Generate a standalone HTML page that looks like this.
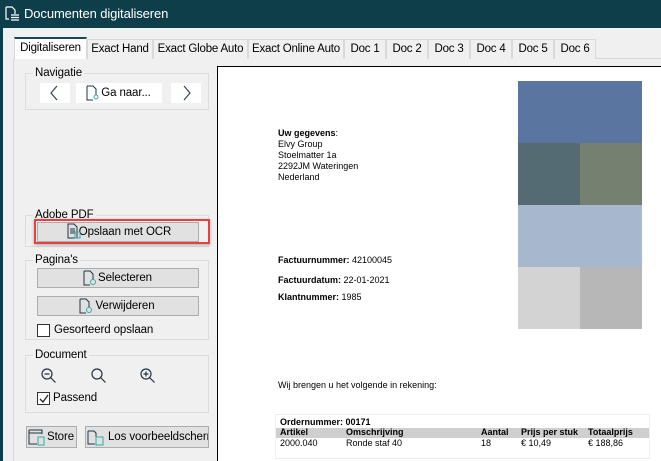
<!DOCTYPE html><html><head><style>
*{box-sizing:border-box;margin:0;padding:0}
html{width:661px;height:461px;overflow:hidden}
body{width:661px;height:461px;overflow:hidden;background:#f0f0f0;font-family:"Liberation Sans",sans-serif;font-size:11.5px;color:#000;position:relative;letter-spacing:-0.1px}
.a{position:absolute;white-space:nowrap}
.title{left:0;top:0;width:661px;height:28px;background:#0f3e4b;color:#fff;font-size:13px;line-height:28px;padding-left:24px}
.tab{position:absolute;top:39px;height:20px;background:#f0f0f0;border:1px solid #d9d9d9;border-bottom:none;text-align:center;line-height:19px;font-size:11.5px;white-space:nowrap;letter-spacing:-0.2px}
.fs{position:absolute;border:1px solid #dcdcdc}
.lg{position:absolute;top:-8px;left:7px;background:#f0f0f0;padding:0 2px;line-height:14px}
.btn{position:absolute;background:#e1e1e1;border:1px solid #adadad;text-align:center;line-height:18px;white-space:nowrap}
.wb{position:absolute;background:#fff;text-align:center;line-height:20px}
.doc{left:217px;top:66px;width:444px;height:395px;background:#fff;border:1px solid #000;border-bottom:none;border-right:none;overflow:hidden}
.d{position:absolute;font-size:9px;line-height:11px;white-space:nowrap;letter-spacing:0}
.cb{position:absolute;width:13px;height:13px;border:1px solid #333;background:#fff}
</style></head><body>
<div class="a title">Documenten digitaliseren</div>
<svg class="a" style="left:4px;top:6px" width="16" height="16" viewBox="0 0 16 16" fill="none" stroke="#fff" stroke-width="1.2"><path d="M2 1h6l3 3v4M2 1v12h3"/><path d="M7 9h8M7 11.5h8M7 14h8"/></svg>
<div class="a" style="left:0;top:28px;width:3px;height:433px;background:#0f3e4b"></div>
<div class="a" style="left:13px;top:58px;width:1px;height:403px;background:#d9d9d9"></div>
<div class="a" style="left:13px;top:58px;width:648px;height:1px;background:#d9d9d9"></div>
<div class="tab" style="left:14px;width:73px;top:37px;height:22px;background:#fff;border-top:2px solid #1a4656;border-left:1px solid #d9d9d9">Digitaliseren</div>
<div class="tab" style="left:87px;width:66px">Exact Hand</div>
<div class="tab" style="left:153px;width:95px">Exact Globe Auto</div>
<div class="tab" style="left:248px;width:96px">Exact Online Auto</div>
<div class="tab" style="left:344px;width:42px">Doc 1</div>
<div class="tab" style="left:386px;width:42px">Doc 2</div>
<div class="tab" style="left:428px;width:42px">Doc 3</div>
<div class="tab" style="left:470px;width:42px">Doc 4</div>
<div class="tab" style="left:512px;width:42px">Doc 5</div>
<div class="tab" style="left:554px;width:42px">Doc 6</div>

<div class="fs" style="left:25px;top:73px;width:184px;height:37px"><span class="lg">Navigatie</span></div>
<div class="wb" style="left:40px;top:83px;width:30px;height:20px"></div>
<svg class="a" style="left:49px;top:85px" width="10" height="16" viewBox="0 0 10 16" fill="none" stroke="#345" stroke-width="1.2"><path d="M8 1L2 8l6 7"/></svg>
<div class="wb" style="left:76px;top:83px;width:86px;padding-left:14px">Ga naar...</div>
<svg class="a" style="left:86px;top:85px" width="14" height="16" viewBox="0 0 14 16" fill="none" stroke="#234" stroke-width="1"><path d="M1 1h6l3 3v6M1 1v14h6"/><circle cx="10" cy="12" r="2" stroke="#3aa"/></svg>
<div class="wb" style="left:171px;top:83px;width:30px;height:20px"></div>
<svg class="a" style="left:182px;top:85px" width="10" height="16" viewBox="0 0 10 16" fill="none" stroke="#345" stroke-width="1.2"><path d="M2 1l6 7-6 7"/></svg>

<div class="fs" style="left:25px;top:215px;width:184px;height:32px"><span class="lg">Adobe PDF</span></div>
<div class="btn" style="left:37px;top:222px;width:162px;padding-left:14px">Opslaan met OCR</div>
<div class="a" style="left:34px;top:219px;width:176px;height:25px;border:2px solid #e8413d;box-shadow:0 1px 3px rgba(0,0,0,.3)"></div>
<svg class="a" style="left:67px;top:223px" width="14" height="16" viewBox="0 0 14 16" fill="none" stroke="#234"><path d="M1 1h6l3 3v11H1z M3 6h5M3 8h5M3 10h5"/><rect x="8" y="9" width="5" height="6" stroke="#3aa"/></svg>

<div class="fs" style="left:25px;top:260px;width:184px;height:80px"><span class="lg">Pagina's</span></div>
<div class="btn" style="left:37px;top:268px;width:162px;height:20px;padding-left:14px">Selecteren</div>
<svg class="a" style="left:83px;top:270px" width="14" height="16" viewBox="0 0 14 16" fill="none" stroke="#234"><path d="M1 1h6l3 3v6M1 1v14h6"/><circle cx="10" cy="12" r="2.5" stroke="#3aa"/></svg>
<div class="btn" style="left:37px;top:296px;width:162px;height:20px;padding-left:14px">Verwijderen</div>
<svg class="a" style="left:79px;top:298px" width="14" height="16" viewBox="0 0 14 16" fill="none" stroke="#234"><path d="M1 1h6l3 3v6M1 1v14h6"/><circle cx="10" cy="12" r="2.5" stroke="#3aa"/></svg>
<div class="cb" style="left:37px;top:324px"></div>
<div class="a" style="left:54px;top:324px">Gesorteerd opslaan</div>

<div class="fs" style="left:25px;top:355px;width:184px;height:58px"><span class="lg">Document</span></div>
<div class="wb" style="left:34px;top:366px;width:30px"></div>
<div class="wb" style="left:69px;top:366px;width:60px"></div>
<div class="wb" style="left:133px;top:366px;width:30px"></div>
<svg class="a" style="left:40px;top:367px" width="18" height="18" viewBox="0 0 18 18" fill="none" stroke="#234" stroke-width="1.2"><circle cx="7" cy="7" r="5"/><path d="M10.5 10.5l5 5M4.5 7h5"/></svg>
<svg class="a" style="left:90px;top:367px" width="18" height="18" viewBox="0 0 18 18" fill="none" stroke="#234" stroke-width="1.2"><circle cx="7" cy="7" r="5"/><path d="M10.5 10.5l5 5"/></svg>
<svg class="a" style="left:139px;top:367px" width="18" height="18" viewBox="0 0 18 18" fill="none" stroke="#234" stroke-width="1.2"><circle cx="7" cy="7" r="5"/><path d="M10.5 10.5l5 5M4.5 7h5M7 4.5v5"/></svg>
<div class="cb" style="left:37px;top:392px"></div>
<svg class="a" style="left:38px;top:393px" width="12" height="12" viewBox="0 0 12 12" fill="none" stroke="#222" stroke-width="1.3"><path d="M2 6l3 3 5-7"/></svg>
<div class="a" style="left:53px;top:392px">Passend</div>

<div class="btn" style="left:26px;top:426px;width:51px;height:22px;line-height:20px;padding-left:18px">Store</div>
<svg class="a" style="left:28px;top:428px" width="18" height="18" viewBox="0 0 18 18" fill="none" stroke="#234"><path d="M1 2h13v4M1 2v14h8M1 5h13"/><rect x="10" y="9" width="6" height="8" stroke="#3aa"/></svg>
<div class="btn" style="left:85px;top:426px;width:124px;height:22px;line-height:20px;padding-left:22px;overflow:hidden">Los voorbeeldscherm</div>
<svg class="a" style="left:87px;top:428px" width="18" height="18" viewBox="0 0 18 18" fill="none" stroke="#234"><path d="M1 3h6l2 2v4M1 3v13h7"/><rect x="9" y="9" width="7" height="8" stroke="#3aa"/></svg>

<div class="a doc">
<div class="a" style="left:300px;top:14px;width:62px;height:62px;background:#5a76a0"></div>
<div class="a" style="left:362px;top:14px;width:62px;height:62px;background:#5a76a0"></div>
<div class="a" style="left:300px;top:76px;width:62px;height:62px;background:#546b74"></div>
<div class="a" style="left:362px;top:76px;width:62px;height:62px;background:#768070"></div>
<div class="a" style="left:300px;top:138px;width:62px;height:62px;background:#a7b7ce"></div>
<div class="a" style="left:362px;top:138px;width:62px;height:62px;background:#a7b7ce"></div>
<div class="a" style="left:300px;top:200px;width:62px;height:62px;background:#d3d3d3"></div>
<div class="a" style="left:362px;top:200px;width:62px;height:62px;background:#b7b7b7"></div>
<div class="d" style="left:60px;top:61px"><b>Uw gegevens</b>:<br>Elvy Group<br>Stoelmatter 1a<br>2292JM Wateringen<br>Nederland</div>
<div class="d" style="left:60px;top:188px"><b>Factuurnummer:</b> 42100045</div>
<div class="d" style="left:60px;top:208px"><b>Factuurdatum:</b> 22-01-2021</div>
<div class="d" style="left:60px;top:225px"><b>Klantnummer:</b> 1985</div>
<div class="d" style="left:60px;top:313px">Wij brengen u het volgende in rekening:</div>
<div class="a" style="left:57px;top:347px;width:375px;height:45px;border:1px solid #eee"></div>
<div class="d" style="left:62px;top:350px"><b>Ordernummer: 00171</b></div>
<div class="a" style="left:58px;top:361px;width:373px;height:10px;background:#cfcfcf"></div>
<div class="d" style="left:62px;top:360px;width:380px"><b><span class="a" style="left:0">Artikel</span><span class="a" style="left:66px">Omschrijving</span><span class="a" style="left:201px">Aantal</span><span class="a" style="left:241px">Prijs per stuk</span><span class="a" style="left:308px">Totaalprijs</span></b></div>
<div class="d" style="left:62px;top:371px;width:380px"><span class="a" style="left:0">2000.040</span><span class="a" style="left:66px">Ronde staf 40</span><span class="a" style="left:201px">18</span><span class="a" style="left:241px">€ 10,49</span><span class="a" style="left:308px">€ 188,86</span></div>
</div>
</body></html>
